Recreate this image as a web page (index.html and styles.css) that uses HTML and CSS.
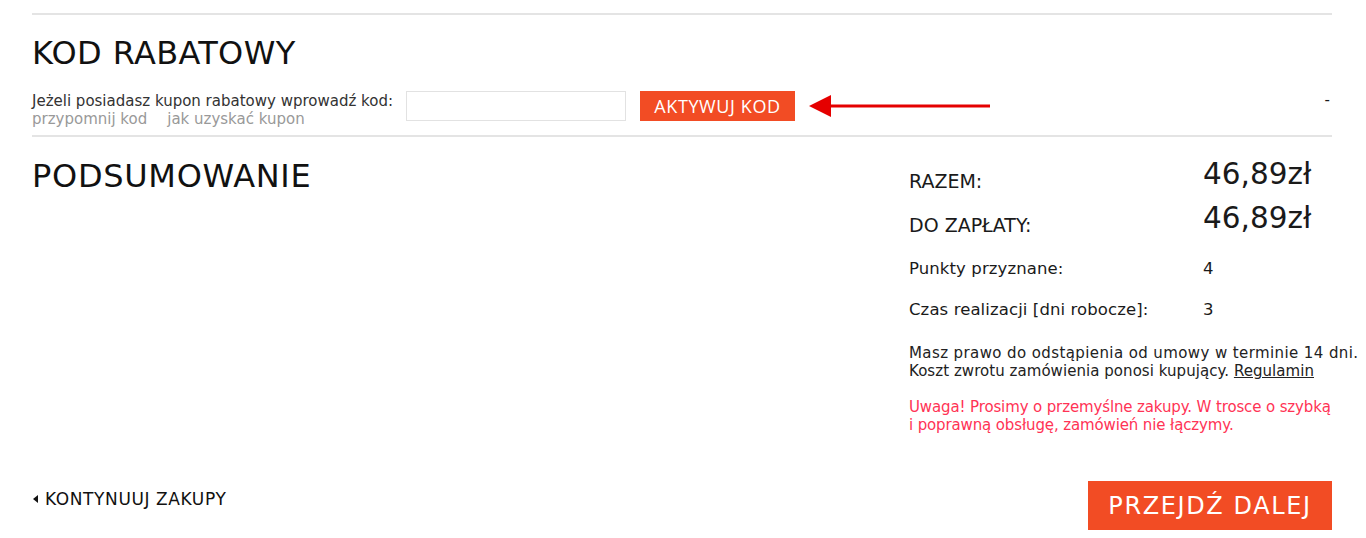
FILE: index.html
```html
<!DOCTYPE html>
<html lang="pl">
<head>
    <meta charset="UTF-8">
    <meta name="viewport" content="width=device-width, initial-scale=1.0">
    <title>Koszyk</title>
    <link rel="stylesheet" href="styles.css">
</head>
<body>
    <div class="cart">
        <div class="sep"></div>
        <h2 class="title">KOD RABATOWY</h2>
        <div class="coupon">
            <div class="coupon_info">
                <p>Jeżeli posiadasz kupon rabatowy wprowadź kod:</p>
                <p class="links"><a href="#">przypomnij kod</a><a href="#">jak uzyskać kupon</a></p>
            </div>
            <input type="text" class="code">
            <button class="activate">AKTYWUJ KOD</button>
            <svg class="arrow" width="184" height="22" viewBox="0 0 184 22">
                <path d="M0 11 L22 0 L22 22 Z" fill="#e50000"/>
                <rect x="18" y="9.5" width="163" height="3" fill="#e50000"/>
            </svg>
            <span class="discount">-</span>
        </div>
        <div class="sep"></div>
        <div class="summary">
            <h2 class="title">PODSUMOWANIE</h2>
            <div class="totals">
                <div class="row big r1"><span class="label">RAZEM:</span><span class="value">46,89zł</span></div>
                <div class="row big r2"><span class="label">DO ZAPŁATY:</span><span class="value">46,89zł</span></div>
                <div class="row r3"><span class="label">Punkty przyznane:</span><span class="value">4</span></div>
                <div class="row r4"><span class="label">Czas realizacji [dni robocze]:</span><span class="value">3</span></div>
                <p class="note"><span class="wide">Masz prawo do odstąpienia od umowy w terminie 14 dni.</span><br>Koszt zwrotu zamówienia ponosi kupujący. <a href="#">Regulamin</a></p>
                <p class="warn">Uwaga! Prosimy o przemyślne zakupy. W trosce o szybką<br>i poprawną obsługę, zamówień nie łączymy.</p>
            </div>
        </div>
        <div class="bottom">
            <a href="#" class="back">KONTYNUUJ ZAKUPY</a>
            <button class="next">PRZEJDŹ DALEJ</button>
        </div>
    </div>
</body>
</html>
```

FILE: styles.css
```css
*{
    margin:0;
    padding:0;
    box-sizing:border-box;
}
body{
    background:#fff;
    font-family:"DejaVu Sans", sans-serif;
    color:#1a1a1a;
}
.cart{
    padding:13px 34px 0 32px;
}
.sep{
    border-top:2px solid #e4e4e4;
}
.title{
    font-weight:normal;
    font-size:32px;
    line-height:38px;
    color:#111;
    letter-spacing:0.35px;
}
.cart>.title{
    margin:19px 0 19px;
}
.coupon{
    display:flex;
    align-items:flex-start;
    margin-bottom:7px;
}
.coupon_info{
    font-size:15px;
    line-height:18px;
    color:#333;
    width:374px;
    padding-top:1px;
    white-space:nowrap;
}
.coupon_info .links a{
    color:#999;
    text-decoration:none;
    margin-right:20px;
}
.code{
    width:220px;
    height:30px;
    border:1px solid #e2e2e2;
    background:#fff;
}
.activate{
    margin-left:14px;
    width:155px;
    height:30px;
    border:none;
    background:#f24c24;
    color:#fff;
    font-family:"Open Sans", sans-serif;
    font-size:18px;
    letter-spacing:0.6px;
}
.arrow{
    margin:4px 0 0 14px;
}
.discount{
    margin-left:auto;
    margin-right:2px;
    font-size:15px;
    line-height:18px;
}
.summary{
    display:flex;
    justify-content:space-between;
    padding-top:18px;
}
.summary .title{
    letter-spacing:0.7px;
    margin-top:2px;
}
.totals{
    width:423px;
}
.row{
    display:flex;
    align-items:flex-end;
    font-size:16.5px;
    letter-spacing:0.1px;
    line-height:1;
}
.row .label{
    width:294px;
}
.row.big{
    font-size:19px;
    letter-spacing:0;
}
.row.big .value{
    font-size:29.5px;
    margin-bottom:1.5px;
}
.r1{ height:36px; }
.r2{ height:44px; }
.r3{ height:42px; }
.r4{ height:41px; }
.note, .warn{
    font-size:15px;
    line-height:18px;
    white-space:nowrap;
}
.note{
    margin-top:26px;
    color:#222;
    letter-spacing:0.05px;
}
.note .wide{
    letter-spacing:0.4px;
}
.note a{
    color:#222;
}
.warn{
    color:#ff3355;
    margin-top:18px;
    letter-spacing:-0.13px;
}
.bottom{
    display:flex;
    justify-content:space-between;
    align-items:flex-start;
    margin-top:47px;
}
.back{
    margin-top:7.5px;
    color:#111;
    text-decoration:none;
    font-size:17px;
    line-height:20px;
    letter-spacing:0.6px;
    padding-left:13px;
    position:relative;
}
.back::before{
    content:"";
    position:absolute;
    left:1px;
    top:6px;
    border-right:5px solid #111;
    border-top:4px solid transparent;
    border-bottom:4px solid transparent;
}
.next{
    width:244px;
    height:49px;
    border:none;
    background:#f24c24;
    color:#fff;
    font-family:"DejaVu Sans", sans-serif;
    font-size:24px;
    letter-spacing:1.6px;
}
```
